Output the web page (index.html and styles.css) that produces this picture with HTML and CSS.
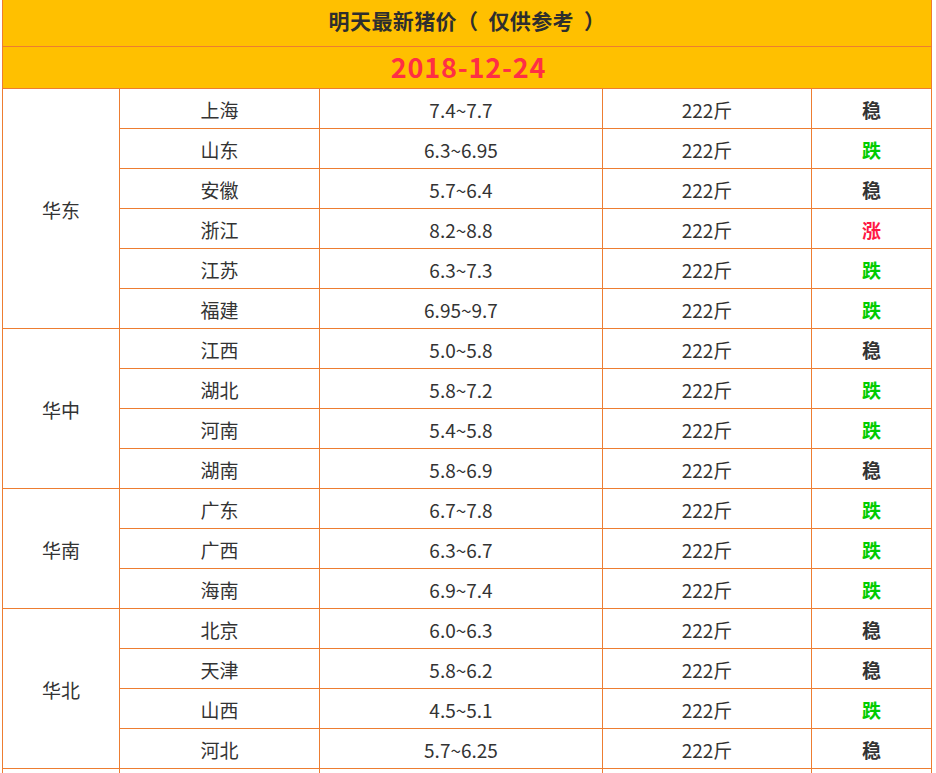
FILE: index.html
```html
<!DOCTYPE html>
<html lang="zh-CN">
<head>
<meta charset="utf-8">
<title>明天最新猪价</title>
<link rel="stylesheet" href="styles.css">
</head>
<body>
<div class="sheet">
  <div class="title">明天最新猪价<span class="paren-open">（</span>仅供参考<span class="paren-close">）</span></div>
  <div class="date">2018-12-24</div>

  <div class="region r6">华东</div>
  <div class="cell">上海</div><div class="cell">7.4~7.7</div><div class="cell">222斤</div><div class="cell trend stable">稳</div>
  <div class="cell">山东</div><div class="cell">6.3~6.95</div><div class="cell">222斤</div><div class="cell trend down">跌</div>
  <div class="cell">安徽</div><div class="cell">5.7~6.4</div><div class="cell">222斤</div><div class="cell trend stable">稳</div>
  <div class="cell">浙江</div><div class="cell">8.2~8.8</div><div class="cell">222斤</div><div class="cell trend up">涨</div>
  <div class="cell">江苏</div><div class="cell">6.3~7.3</div><div class="cell">222斤</div><div class="cell trend down">跌</div>
  <div class="cell">福建</div><div class="cell">6.95~9.7</div><div class="cell">222斤</div><div class="cell trend down">跌</div>

  <div class="region r4">华中</div>
  <div class="cell">江西</div><div class="cell">5.0~5.8</div><div class="cell">222斤</div><div class="cell trend stable">稳</div>
  <div class="cell">湖北</div><div class="cell">5.8~7.2</div><div class="cell">222斤</div><div class="cell trend down">跌</div>
  <div class="cell">河南</div><div class="cell">5.4~5.8</div><div class="cell">222斤</div><div class="cell trend down">跌</div>
  <div class="cell">湖南</div><div class="cell">5.8~6.9</div><div class="cell">222斤</div><div class="cell trend stable">稳</div>

  <div class="region r3">华南</div>
  <div class="cell">广东</div><div class="cell">6.7~7.8</div><div class="cell">222斤</div><div class="cell trend down">跌</div>
  <div class="cell">广西</div><div class="cell">6.3~6.7</div><div class="cell">222斤</div><div class="cell trend down">跌</div>
  <div class="cell">海南</div><div class="cell">6.9~7.4</div><div class="cell">222斤</div><div class="cell trend down">跌</div>

  <div class="region r4">华北</div>
  <div class="cell">北京</div><div class="cell">6.0~6.3</div><div class="cell">222斤</div><div class="cell trend stable">稳</div>
  <div class="cell">天津</div><div class="cell">5.8~6.2</div><div class="cell">222斤</div><div class="cell trend stable">稳</div>
  <div class="cell">山西</div><div class="cell">4.5~5.1</div><div class="cell">222斤</div><div class="cell trend down">跌</div>
  <div class="cell">河北</div><div class="cell">5.7~6.25</div><div class="cell">222斤</div><div class="cell trend stable">稳</div>

  <div class="region r3">东北</div>
  <div class="cell">辽宁</div><div class="cell">5.6~6.0</div><div class="cell">222斤</div><div class="cell trend stable">稳</div>
  <div class="cell">吉林</div><div class="cell">5.5~5.9</div><div class="cell">222斤</div><div class="cell trend stable">稳</div>
  <div class="cell">黑龙江</div><div class="cell">5.4~5.8</div><div class="cell">222斤</div><div class="cell trend stable">稳</div>
</div>
</body>
</html>
```

FILE: styles.css
```css
html, body {
  margin: 0;
  padding: 0;
  background: #ffffff;
}

body {
  font-family: "Noto Sans CJK SC", "Noto Sans", sans-serif;
  color: #333333;
}

.sheet {
  display: grid;
  grid-template-columns: 116px 199px 282px 208px 119px;
  grid-template-rows: 46px 41px;
  grid-auto-rows: 39px;
  gap: 1px;
  width: max-content;
  margin-left: 2px;
  padding: 0 1px 1px 1px;
  background: #ed7d31;
}

.title,
.date {
  grid-column: 1 / -1;
  background: #ffc000;
  display: flex;
  align-items: center;
  justify-content: center;
  font-weight: bold;
}

.title {
  font-size: 21px;
  color: #2e2e2e;
  padding-bottom: 7px;
  letter-spacing: 0.4px;
}

.paren-open {
  margin-right: 10px;
}

.paren-close {
  margin-left: 10px;
}

.date {
  font-size: 27px;
  color: #ff2f45;
  letter-spacing: 0.8px;
  padding-bottom: 3px;
  padding-left: 3px;
}

.cell,
.region {
  background: #ffffff;
  display: flex;
  align-items: center;
  justify-content: center;
  font-size: 19px;
  padding-top: 2px;
}

.region {
  grid-column: 1;
}

.r6 { grid-row: span 6; }
.r4 { grid-row: span 4; }
.r3 { grid-row: span 3; }

.trend {
  font-weight: bold;
}

.stable { color: #333333; }
.down { color: #00cc00; }
.up { color: #ff1744; }
```
